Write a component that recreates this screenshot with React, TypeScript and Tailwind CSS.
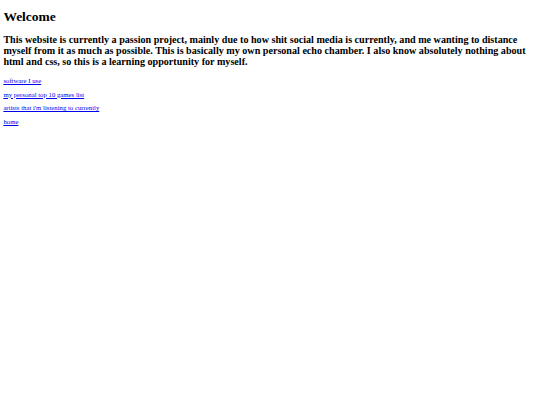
import React from "react";

export default function App() {
  return (
    <div className="min-h-[405px] bg-white px-[3.375px] font-['Liberation_Serif','Times_New_Roman',serif] text-black">
      <h1 className="my-[9.045px] text-[13.5px] font-bold leading-[normal]">Welcome</h1>
      <h2 className="mt-[8.404px] mb-[9.9px] text-[10.125px] font-bold leading-[normal]">
        This website is currently a passion project, mainly due to how shit social media is currently, and me wanting to distance myself from it as much as possible. This is basically my own personal echo chamber. I also know absolutely nothing about html and css, so this is a learning opportunity for myself.
      </h2>
      <p className="my-[6.75px] text-[6.75px] leading-[normal]">
        <a href="#" className="text-[#0000ee] underline">software I use</a>
      </p>
      <p className="my-[6.75px] text-[6.75px] leading-[normal]">
        <a href="#" className="text-[#0000ee] underline">my personal top 10 games list</a>
      </p>
      <p className="my-[6.75px] text-[6.75px] leading-[normal]">
        <a href="#" className="text-[#0000ee] underline">artists that i'm listening to currently</a>
      </p>
      <p className="my-[6.75px] text-[6.75px] leading-[normal]">
        <a href="#" className="text-[#0000ee] underline">home</a>
      </p>
    </div>
  );
}
